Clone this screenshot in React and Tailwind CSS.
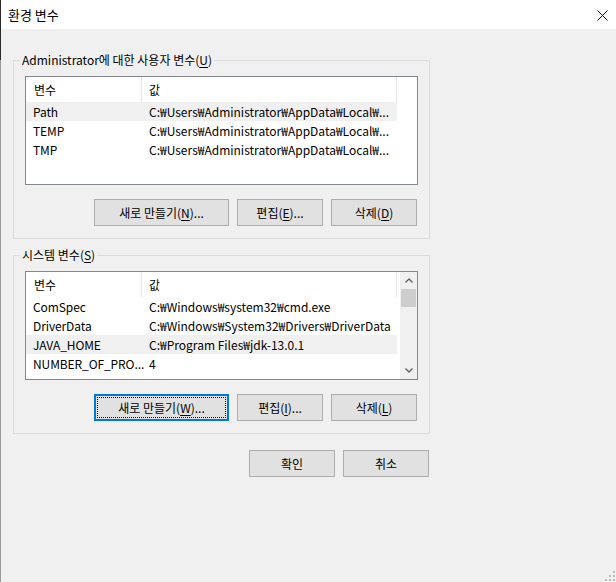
const userVars = [
  ["Path", "C:₩Users₩Administrator₩AppData₩Local₩..."],
  ["TEMP", "C:₩Users₩Administrator₩AppData₩Local₩..."],
  ["TMP", "C:₩Users₩Administrator₩AppData₩Local₩..."],
];

const systemVars = [
  ["ComSpec", "C:₩Windows₩system32₩cmd.exe"],
  ["DriverData", "C:₩Windows₩System32₩Drivers₩DriverData"],
  ["JAVA_HOME", "C:₩Program Files₩jdk-13.0.1"],
  ["NUMBER_OF_PRO...", "4"],
];

const Chevron = ({ down }) => (
  <svg width="8" height="5" viewBox="0 0 8 5" fill="none">
    <polyline
      points={down ? "0.5,0.5 4,4 7.5,0.5" : "0.5,4.5 4,1 7.5,4.5"}
      stroke="#606060"
      strokeWidth="1.3"
    />
  </svg>
);

const Scrollbar = () => (
  <div className="w-[17px] shrink-0 bg-[#f0f0f0] flex flex-col">
    <div className="h-[17px] flex items-center justify-center">
      <Chevron />
    </div>
    <div className="h-[18px] mx-px bg-[#cdcdcd]" />
    <div className="flex-1" />
    <div className="h-[17px] flex items-center justify-center">
      <Chevron down />
    </div>
  </div>
);

const ListView = ({ rows, selected, scroll }) => (
  <div className="h-[109px] border border-[#828790] bg-white flex overflow-hidden">
    <div className="flex-1 flex flex-col overflow-hidden">
      <div className="h-[25px] shrink-0 flex">
        <div className="w-[116px] shrink-0 border-r border-[#e5e5e5] pl-[8px] flex items-center">
          변수
        </div>
        <div className="w-[255px] shrink-0 border-r border-[#e5e5e5] pl-[7px] flex items-center">
          값
        </div>
      </div>
      {rows.map(([name, value], i) => (
        <div
          key={name}
          className={
            "h-[19px] shrink-0 w-[371px] flex items-center whitespace-nowrap " +
            (i === selected ? "bg-[#f0f0f0]" : "")
          }
        >
          <div className="w-[116px] shrink-0 pl-[7px] tracking-[-0.1px]">{name}</div>
          <div className="w-[255px] shrink-0 pl-[7px] overflow-hidden">{value}</div>
        </div>
      ))}
    </div>
    {scroll && <Scrollbar />}
  </div>
);

const Key = ({ children }) => <span className="underline underline-offset-2">{children}</span>;

const Button = ({ wide, focused, children }) => (
  <button
    className={
      "h-[27px] bg-[#e1e1e1] flex items-stretch " +
      (wide ? "w-[135px] " : "w-[86px] ") +
      (focused ? "border-2 border-[#0078d7] p-px" : "border border-[#adadad]")
    }
  >
    <span
      className={
        "flex-1 flex items-center justify-center " +
        (focused ? "border border-dotted border-black" : "")
      }
    >
      {children}
    </span>
  </button>
);

const Group = ({ title, rows, selected, scroll, keys, focused, className }) => (
  <fieldset className={"w-[417px] border border-[#dcdcdc] " + className}>
    <legend className="ml-[6px] px-[2px] leading-[16px]">{title}</legend>
    <div className="pl-[11px] pr-[11px] pt-2 pb-[12px]">
      <ListView rows={rows} selected={selected} scroll={scroll} />
      <div className="mt-[14px] flex justify-end gap-2 pr-px">
        <Button wide focused={focused}>
          새로 만들기(<Key>{keys[0]}</Key>)...
        </Button>
        <Button>
          편집(<Key>{keys[1]}</Key>)...
        </Button>
        <Button>
          삭제(<Key>{keys[2]}</Key>)
        </Button>
      </div>
    </div>
  </fieldset>
);

export default function App() {
  return (
    <div className="w-[616px] h-[582px] bg-[#f0f0f0] flex overflow-hidden text-[12px] text-black font-['Noto_Sans_CJK_KR',sans-serif]">
      {/* window edge */}
      <div className="w-px shrink-0 flex flex-col">
        <div className="h-[60px] bg-[#2b2b2b]" />
        <div className="flex-1 bg-[#9a9a9a]" />
      </div>

      <div className="flex-1 flex flex-col">
        <div className="h-[29px] shrink-0 bg-white flex items-center justify-between pl-[7px] pr-[8px] pt-px">
          <span className="text-[13px]">환경 변수</span>
          <svg width="11" height="11" viewBox="0 0 11 11">
            <path d="M0.5 0.5 L10.5 10.5 M10.5 0.5 L0.5 10.5" stroke="#111" strokeWidth="1" />
          </svg>
        </div>

        <div className="pl-[12px] flex flex-col">
          <Group
            className="mt-[23px]"
            title={
              <>
                Administrator에 대한 사용자 변수(<Key>U</Key>)
              </>
            }
            rows={userVars}
            selected={0}
            keys={["N", "E", "D"]}
          />
          <Group
            className="mt-2"
            title={
              <>
                시스템 변수(<Key>S</Key>)
              </>
            }
            rows={systemVars}
            selected={2}
            scroll
            focused
            keys={["W", "I", "L"]}
          />

          <div className="w-[417px] mt-[16px] flex justify-end gap-2 pr-px">
            <Button>확인</Button>
            <Button>취소</Button>
          </div>
        </div>

        {/* size grip */}
        <div className="mt-auto flex justify-end pr-px pb-px">
          <svg width="10" height="10" viewBox="0 0 10 10" fill="#bdbdbd">
            <rect x="8" y="0" width="2" height="2" />
            <rect x="4" y="4" width="2" height="2" />
            <rect x="8" y="4" width="2" height="2" />
            <rect x="0" y="8" width="2" height="2" />
            <rect x="4" y="8" width="2" height="2" />
            <rect x="8" y="8" width="2" height="2" />
          </svg>
        </div>
      </div>
    </div>
  );
}
